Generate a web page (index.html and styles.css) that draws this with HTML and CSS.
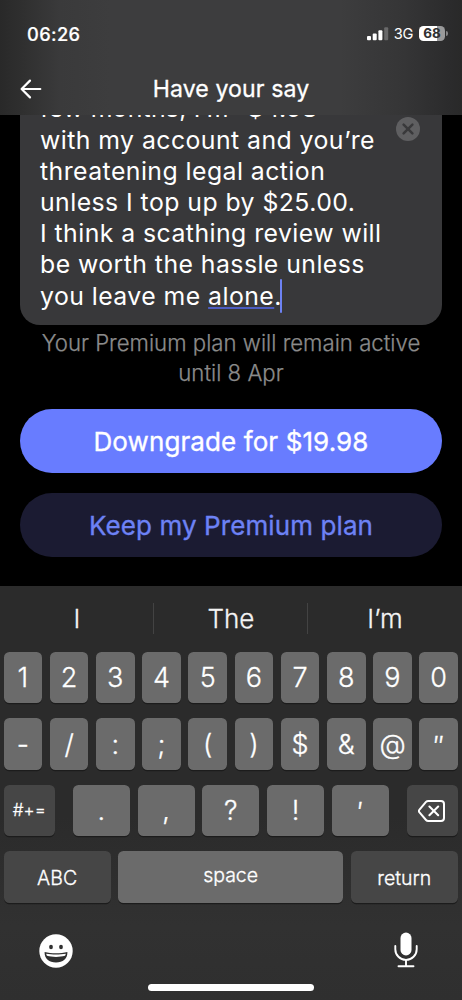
FILE: index.html
```html
<!DOCTYPE html>
<html lang="en">
<head>
<meta charset="utf-8">
<title>Have your say</title>
<link rel="stylesheet" href="styles.css">
</head>
<body>
<main class="phone">
  <header class="top">
    <div class="status">
      <span class="time">06:26</span>
      <div class="indicators">
        <svg class="signal" width="22" height="14" viewBox="0 0 22 14">
          <rect x="0" y="9" width="4" height="4.3" rx="1"/><rect x="5.7" y="6.6" width="4" height="6.7" rx="1"/><rect x="11.4" y="3.3" width="4" height="10" rx="1"/><rect class="dim" x="17.2" y="0.2" width="4" height="13.1" rx="1"/>
        </svg>
        <span class="network">3G</span>
        <div class="battery"><span class="level">68</span><i class="nub"></i></div>
      </div>
    </div>
    <nav class="nav">
      <svg class="back" width="22" height="20" viewBox="0 0 22 20"><path d="M20.3 10H1.8M10 1.6L1.6 10L10 18.4"/></svg>
      <h1 class="title">Have your say</h1>
    </nav>
  </header>

  <section class="content">
    <div class="field">
      <p class="message"><span class="line l1">few months, I’m -$4.98</span><span class="line">with my account and you’re</span><span class="line">threatening legal action</span><span class="line">unless I top up by $25.00.</span><span class="line">I think a scathing review will</span><span class="line">be worth the hassle unless</span><span class="line">you leave me <span class="marked">alone</span>.<i class="caret"></i></span></p>
      <svg class="clear" width="24" height="24" viewBox="0 0 24 24"><circle cx="12" cy="12" r="12"/><path d="M7.6 7.6L16.4 16.4M16.4 7.6L7.6 16.4"/></svg>
    </div>
    <p class="note"><span class="line">Your Premium plan will remain active</span><span class="line">until 8 Apr</span></p>
    <button class="btn primary"><span>Downgrade for $19.98</span></button>
    <button class="btn secondary"><span>Keep my Premium plan</span></button>
  </section>

  <section class="keyboard">
    <div class="suggestions"><span>I</span><span>The</span><span>I’m</span></div>
    <div class="rows">
      <div class="row ten"><b class="key">1</b><b class="key">2</b><b class="key">3</b><b class="key">4</b><b class="key">5</b><b class="key">6</b><b class="key">7</b><b class="key">8</b><b class="key">9</b><b class="key">0</b></div>
      <div class="row ten"><b class="key">-</b><b class="key">/</b><b class="key">:</b><b class="key">;</b><b class="key">(</b><b class="key">)</b><b class="key">$</b><b class="key">&amp;</b><b class="key at">@</b><b class="key prime">″</b></div>
      <div class="row third">
        <b class="key dark symbols">#+=</b>
        <div class="middle"><b class="key">.</b><b class="key">,</b><b class="key">?</b><b class="key">!</b><b class="key prime">′</b></div>
        <b class="key dark"><svg class="delete" width="28" height="24" viewBox="0 0 28 24"><path d="M10.2 1.9H23a3 3 0 0 1 3 3V19a3 3 0 0 1-3 3H10.2a3 3 0 0 1-2.2-1L1.5 13.4a2 2 0 0 1 0-2.8L8 2.9a3 3 0 0 1 2.2-1zM11.4 7.5l8.8 8.8M20.2 7.5l-8.8 8.8"/></svg></b>
      </div>
      <div class="row fourth"><b class="key dark word">ABC</b><b class="key word space">space</b><b class="key dark word">return</b></div>
    </div>
    <div class="tools">
      <svg class="emoji" width="34" height="34" viewBox="0 0 34 34"><circle class="face" cx="17" cy="17" r="16.7"/><ellipse cx="12" cy="13" rx="1.9" ry="2.3"/><ellipse cx="22" cy="13" rx="1.9" ry="2.3"/><path d="M5.6 18C9 19 13 19.2 17 19.2s8-.2 11.4-1.2c.3 6.5-4.6 10.5-11.4 10.5S5.3 24.500 5.600 18z"/><path class="teeth" d="M7.2 19.7c5.8 1.1 13.8 1.1 19.6 0-.1.8-.4 1.5-.8 2.1-5 1.5-13 1.5-18 0-.4-.6-.7-1.3-.8-2.1z"/></svg>
      <svg class="mic" width="24" height="36" viewBox="0 0 24 36"><rect x="6.5" y="0.6" width="11" height="22.8" rx="5.5"/><path d="M1.3 14v3.2a10.7 10.7 0 0 0 21.4 0V14M12 28v6M4.5 34.3h15"/></svg>
    </div>
    <div class="home"></div>
  </section>
</main>
</body>
</html>
```
FILE: styles.css
```css
* { box-sizing: border-box; }
body { margin: 0; background: #000; }
.phone {
  width: 462px; height: 1000px; overflow: hidden;
  display: flex; flex-direction: column;
  background: #000; color: #fff;
  font-family: Inter, "Liberation Sans", sans-serif;
}
h1, p { margin: 0; }

.top {
  height: 115px; flex: none;
  background: linear-gradient(90deg, #292929 0, #303030 25px, #3a3a3b 60px, #3d3d3e 110px, #3d3d3e 340px, #353536 405px, #2b2b2c 450px, #292929 100%);
}
.status { height: 67px; display: flex; justify-content: space-between; padding: 0 14px 0 27px; align-items: center; }
.time { font-size: 18.3px; font-weight: 500; letter-spacing: 0.35px; -webkit-text-stroke: 0.2px #fff; }
.indicators { display: flex; align-items: center; }
.signal { fill: #fff; }
.signal .dim { fill: #69696a; }
.network { font-size: 14.6px; letter-spacing: -0.3px; margin: 0 6px 0 5px; }
.battery { display: flex; align-items: center; gap: 1px; }
.level {
  width: 26px; height: 15px; border-radius: 4.5px; color: #303031;
  background: linear-gradient(90deg, #fff 68%, #9a9a9b 68%);
  font-size: 13.5px; font-weight: 700; line-height: 15px; text-align: center;
}
.nub { width: 2px; height: 5px; border-radius: 0 2px 2px 0; background: #858586; }
.nav { height: 44px; display: grid; grid-template-columns: 22px 1fr 22px; align-items: center; padding: 0 20px; }
.back { fill: none; stroke: #fff; stroke-width: 2.2; stroke-linecap: round; stroke-linejoin: round; }
.title { font-size: 23.1px; font-weight: 400; letter-spacing: 0.1px; -webkit-text-stroke: 0.3px #fff; text-align: center; line-height: 30px; }

.content { height: 471px; flex: none; padding: 0 20px; display: flex; flex-direction: column; overflow: hidden; }
.field {
  height: 210px; flex: none; background: #38383a; border-radius: 0 0 20px 20px;
  display: flex; justify-content: space-between; padding: 0 22px 13.2px 20px; overflow: hidden;
  align-items: flex-end;
}
.message { font-size: 24.8px; line-height: 31.2px; letter-spacing: 0.45px; flex: none; width: 345px; }
.line { display: block; white-space: nowrap; }
.l1 { letter-spacing: 0.23px; }
.clear { align-self: flex-start; margin-top: 2px; flex: none; }
.clear circle { fill: #5f5f61; }
.clear path { stroke: #39393b; stroke-width: 2.5; stroke-linecap: round; }
.marked { text-decoration: underline #4c5cc0 2px; text-underline-offset: 2px; text-decoration-skip-ink: none; }
.caret { display: inline-block; width: 2.6px; height: 34px; margin: -12px 0 -8px -2px; vertical-align: -7px; border-radius: 1px; background: #6d82f3; position: relative; top: -7px; }
.note { margin-top: 2.5px; height: 61.5px; color: #8b8b8b; font-size: 22.2px; font-weight: 300; -webkit-text-stroke: 0.25px #8b8b8b; line-height: 30.4px; text-align: center; }
.btn {
  height: 64px; flex: none; border: 0; border-radius: 32px; padding: 0;
  font: 400 26px/65px Inter, "Liberation Sans", sans-serif;
  letter-spacing: 0.1px; -webkit-text-stroke: 0.35px currentColor;
}
.primary { margin-top: 20px; background: #687cff; color: #fff; }
.secondary { margin-top: 20px; background: #1b1b32; color: #6d82f5; }

.keyboard { height: 414px; flex: none; background: linear-gradient(#2b2b2b 0, #2b2b2b 230px, #313131 340px, #2f2f2f 100%); }
.suggestions { height: 65px; display: grid; grid-template-columns: repeat(3, 1fr); align-items: center; }
.suggestions span { height: 31px; line-height: 32px; text-align: center; font-size: 26px; font-weight: 300; -webkit-text-stroke: 0.3px #f4f4f4; color: #f4f4f4; }
.suggestions span + span { border-left: 1px solid #434343; margin-left: -1px; }
.rows { display: flex; flex-direction: column; gap: 14.7px; padding: 0.6px 4px 0 3.6px; }
.row { height: 51.8px; display: grid; }
.ten { grid-template-columns: repeat(10, 1fr); column-gap: 7.6px; }
.third { grid-template-columns: 51.4px 316px 51.4px; justify-content: space-between; }
.middle { display: grid; grid-template-columns: repeat(5, 1fr); column-gap: 7.8px; }
.fourth { grid-template-columns: 107px 224.4px 107.4px; justify-content: space-between; }
.key {
  display: flex; align-items: center; justify-content: center;
  background: #6b6b6b; border-radius: 5.5px; box-shadow: 0 1.3px 0 #1c1c1c;
  font-size: 27px; font-weight: 300; -webkit-text-stroke: 0.3px #fff; line-height: 1; padding-top: 1px;
}
.prime { padding-top: 5px; }
.dark { background: #464646; }
.symbols { font-size: 17px; }
.word { font-size: 19.5px; padding-top: 3px; }
.space { padding: 0 0 2px; }
.delete { fill: none; stroke: #fff; stroke-width: 2; stroke-linecap: round; stroke-linejoin: round; }
.tools { height: 66px; display: flex; justify-content: space-between; padding: 29px 44.5px 0 39px; }
.emoji { fill: #303030; margin-top: 2px; }
.emoji .face, .emoji .teeth { fill: #fff; }
.mic { fill: #fff; }
.mic path { fill: none; stroke: #fff; stroke-width: 1.9; stroke-linecap: round; }
.home { width: 166px; height: 6.5px; border-radius: 4px; background: #fff; margin: 15.3px auto 0; }
```
